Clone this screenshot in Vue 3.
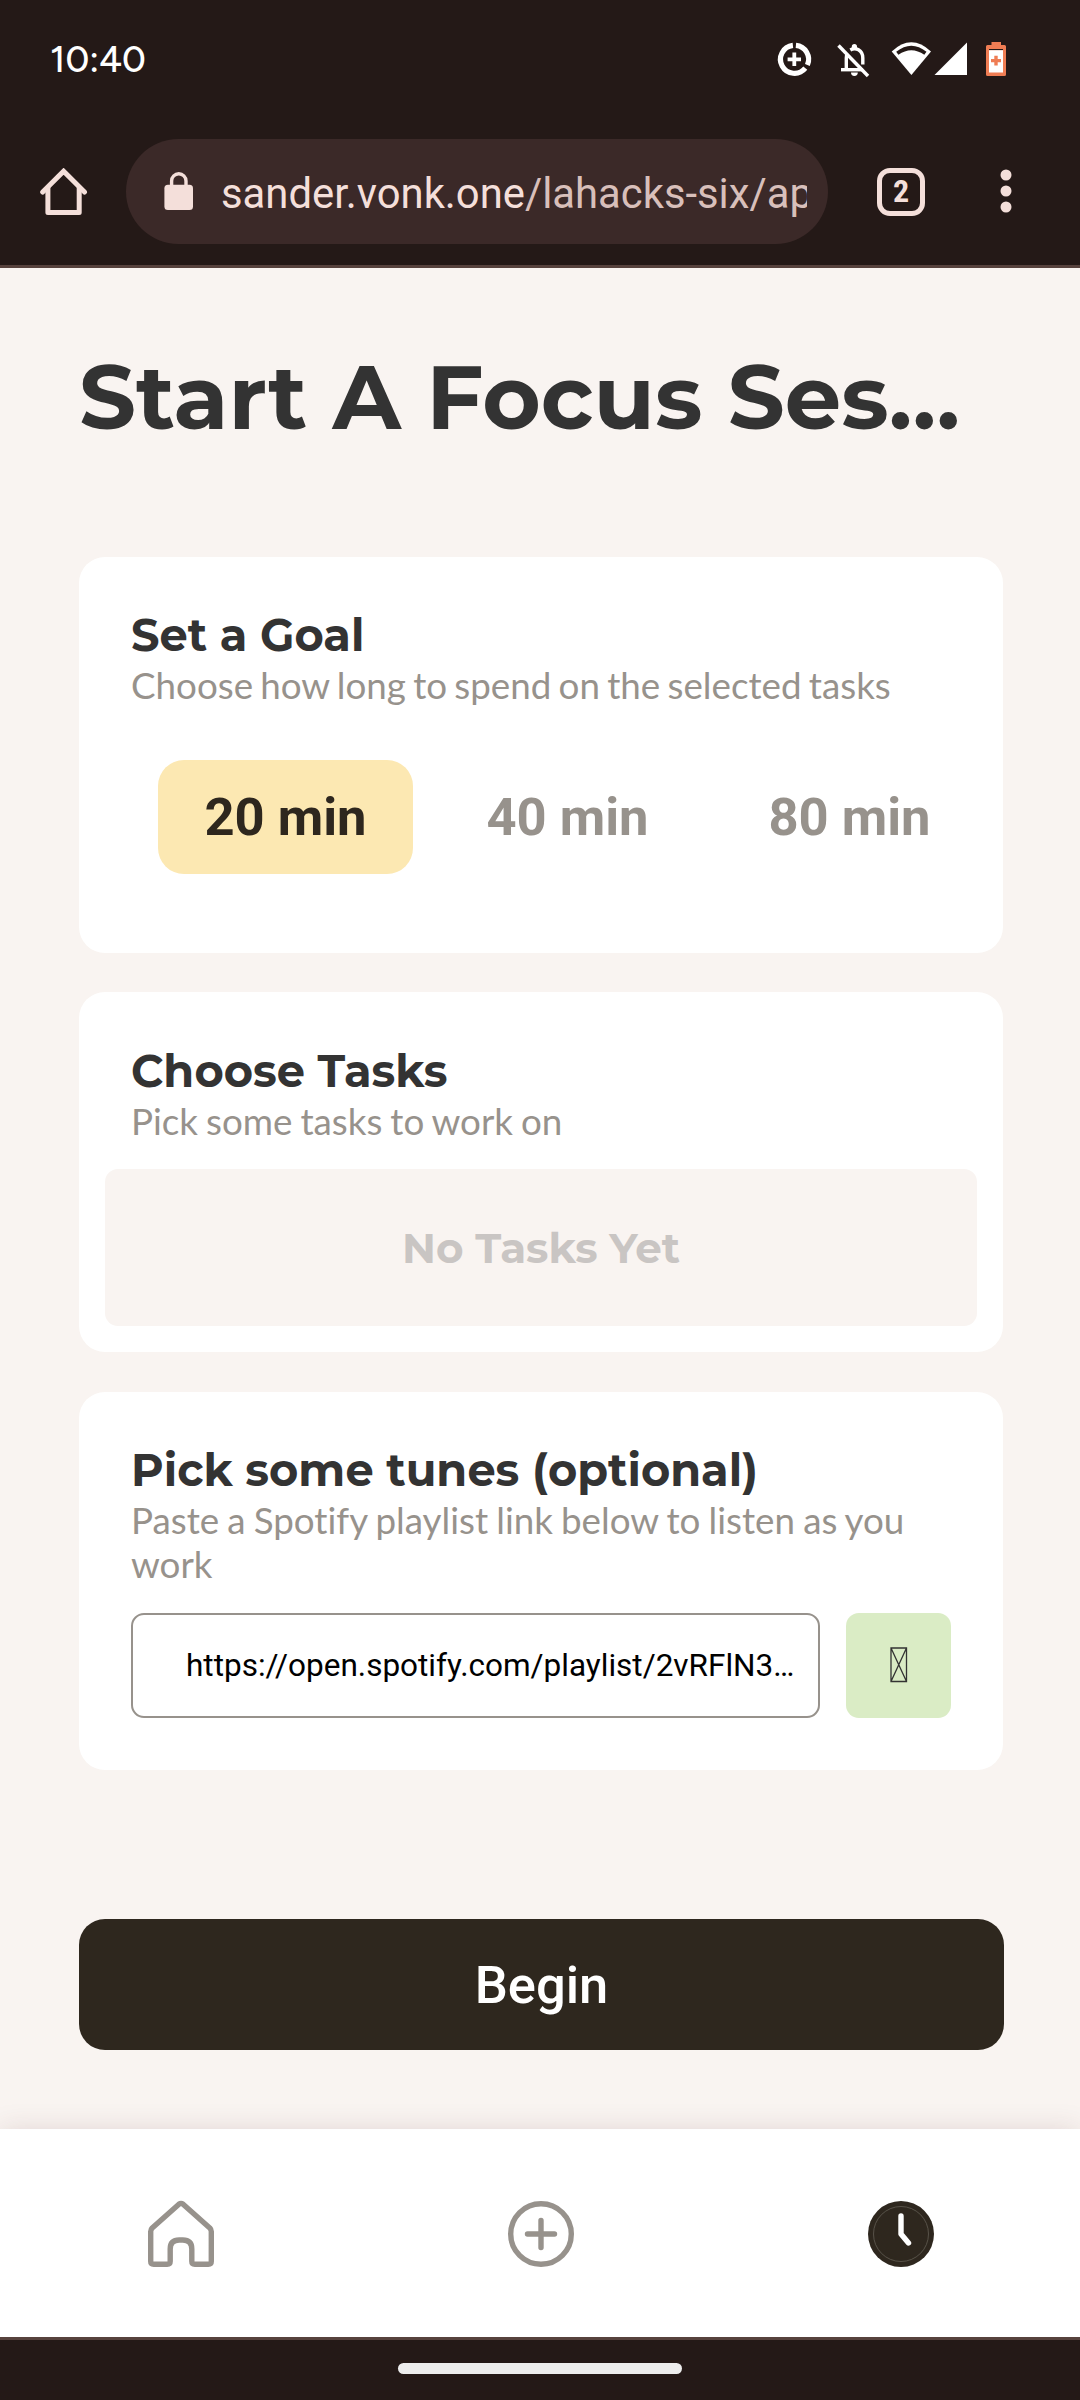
<script setup>
import { ref } from 'vue'

const goals = [20, 40, 80]
const selected = ref(20)
const playlist = 'https://open.spotify.com/playlist/2vRFlN3…'
</script>

<template>
  <div class="screen">
    <header class="chrome">
      <div class="status">
        <span class="time">10:40</span>
        <svg class="status-icons" width="244" height="48" viewBox="770 36 244 48">
          <g fill="none" stroke="#fff" stroke-width="5.2">
            <path d="M792.9 45.4A14 14 0 1 0 805.3 68.2" />
            <path d="M795.9 45.4A14 14 0 0 1 807.4 65" />
            <path d="M794.3 52.6V66M787.6 59.3H801" stroke-width="3.8" />
          </g>
          <g fill="none" stroke="#fff" stroke-width="3.4">
            <path d="M838.5 45.5L868 76" />
            <path d="M841 69.7H863" />
            <path d="M846.3 69V58Q846.3 55.5 847.2 53.6" />
            <path d="M850.3 50Q854.5 47.6 858.5 49.8Q862.8 52.3 862.8 58V64.5" />
          </g>
          <path d="M851.8 48V46.6A2.6 2.6 0 0 1 857 46.6V48.5ZM851 72.6H857.8A3.4 3.4 0 0 1 851 72.6Z" fill="#fff" />
          <path d="M891.7 51.5Q911.3 33.2 931 51.5L911.4 75Z" fill="#fff" />
          <path d="M896.2 51.8Q911.3 39.6 926.5 51.8L924.3 54.8Q911.3 45.6 898.4 54.8Z" fill="#241917" />
          <path d="M934.5 75L967 42.5V75Z" fill="#fff" />
          <path d="M991.5 42H1001V45H1004.5Q1006 45 1006 46.5V74.5Q1006 76 1004.5 76H987.5Q986 76 986 74.5V46.5Q986 45 987.5 45H991.5Z" fill="#ef7d54" />
          <path d="M989 49H1003V50.2H989Z" fill="#241917" />
          <path d="M989 50.2H1003V72.5H989Z" fill="#fff" />
          <path d="M994.3 55.7H997.7V59H1001V62.3H997.7V65.6H994.3V62.3H991V59H994.3Z" fill="#ef7d54" />
        </svg>
      </div>
      <div class="toolbar">
        <svg class="home" width="48" height="48" viewBox="0 0 48 48" fill="none" stroke="#f4dfda" stroke-width="5" stroke-linejoin="round" stroke-linecap="round">
          <path d="M2.7 24L23.6 3.2L44.5 24" stroke-linejoin="miter" />
          <path d="M7.9 20V44.5H39.2V20" />
        </svg>
        <div class="url">
          <svg width="30" height="38" viewBox="0 0 30 38">
            <path d="M7.6 14V9A7.2 7.2 0 0 1 22 9V14" fill="none" stroke="#f4dfda" stroke-width="3.4" />
            <rect x="0.4" y="12.7" width="28.6" height="25.3" rx="3.5" fill="#f4dfda" />
          </svg>
          <div class="address">sander.vonk.one<span>/lahacks-six/ap</span></div>
        </div>
        <div class="tabs">2</div>
        <svg class="more" width="12" height="46" viewBox="0 0 12 46" fill="#f4dfda">
          <circle cx="6" cy="7" r="5.5" /><circle cx="6" cy="23" r="5.5" /><circle cx="6" cy="39" r="5.5" />
        </svg>
      </div>
    </header>

    <main>
      <h1>Start A Focus Ses…</h1>

      <section class="card goal">
        <h2>Set a Goal</h2>
        <p class="sub">Choose how long to spend on the selected tasks</p>
        <div class="options">
          <button v-for="g in goals" :key="g" :class="{ active: g === selected }" @click="selected = g">{{ g }} min</button>
        </div>
      </section>

      <section class="card tasks">
        <h2>Choose Tasks</h2>
        <p class="sub">Pick some tasks to work on</p>
        <div class="empty">No Tasks Yet</div>
      </section>

      <section class="card tunes">
        <h2>Pick some tunes (optional)</h2>
        <p class="sub">Paste a Spotify playlist link below to listen as you work</p>
        <div class="link-row">
          <div class="link">{{ playlist }}</div>
          <button class="go" aria-label="Load playlist">
            <svg width="18" height="36" viewBox="0 0 18 36" fill="none" stroke="#333" stroke-width="1.3">
              <path d="M1 1H16.5V34.5H1ZM1 1L16.5 34.5M16.5 1L1 34.5" />
            </svg>
          </button>
        </div>
      </section>

      <button class="begin">Begin</button>
    </main>

    <nav>
      <a>
        <svg width="68" height="68" viewBox="0 0 68 68" fill="none" stroke="#97928c" stroke-width="5.4" stroke-linejoin="round">
          <path d="M3.7 31.5Q3.7 29.5 5.2 28L31.9 4.2Q34 2.6 36.1 4.2L62.8 28Q64.3 29.5 64.3 31.5V61.3Q64.3 64.3 61.3 64.3H47.8Q44.8 64.3 44.8 61.3V49Q44.8 40 35.8 40H32.2Q23.2 40 23.2 49V61.3Q23.2 64.3 20.2 64.3H6.7Q3.7 64.3 3.7 61.3Z" />
        </svg>
      </a>
      <a>
        <svg width="68" height="68" viewBox="0 0 68 68" fill="none" stroke="#97928c" stroke-width="5.4" stroke-linecap="round">
          <circle cx="34" cy="34" r="30.3" />
          <path d="M34 20.5V47.5M20.5 34H47.5" />
        </svg>
      </a>
      <a>
        <svg width="68" height="68" viewBox="0 0 68 68" fill="none">
          <circle cx="34" cy="34" r="33" fill="#2e271e" />
          <circle cx="34" cy="34" r="27.5" stroke="#69645a" stroke-width="0.7" />
          <path d="M34 16V34L41.5 43" stroke="#fff" stroke-width="5.4" stroke-linecap="round" stroke-linejoin="round" />
        </svg>
      </a>
    </nav>

    <footer><div class="handle"></div></footer>
  </div>
</template>

<style>
body {
  margin: 0;
}
</style>

<style scoped>
.screen {
  width: 1080px;
  height: 2400px;
  display: flex;
  flex-direction: column;
  overflow: hidden;
  background: #f9f4f1;
  font-family: Roboto, sans-serif;
}

.chrome {
  box-sizing: border-box;
  flex: none;
  height: 268px;
  background: #241917;
  border-bottom: 3px solid #57423d;
}

.status {
  display: flex;
  justify-content: space-between;
  align-items: center;
  height: 120px;
  padding: 0 66px 0 50px;
}

.time {
  margin-bottom: 2px;
  color: #fff;
  font: 550 37px/48px Figtree, Outfit, Inter, sans-serif;
}

.toolbar {
  display: flex;
  align-items: center;
  height: 105px;
  margin-top: 19px;
  padding: 0 68px 0 40px;
}

.url {
  box-sizing: border-box;
  display: flex;
  align-items: center;
  gap: 27px;
  width: 702px;
  height: 105px;
  margin-left: 38px;
  padding: 0 21px 0 38px;
  border-radius: 53px;
  background: #3b2928;
}

.url svg {
  flex: none;
  margin-bottom: 2px;
}

.address {
  flex: 1;
  overflow: hidden;
  white-space: nowrap;
  padding-top: 4px;
  color: #f4dfda;
  font-size: 41.8px;
  line-height: 60px;
}

.address span {
  color: #d8bfba;
}

.tabs {
  box-sizing: border-box;
  width: 48px;
  height: 48px;
  margin-left: 49px;
  border: 5px solid #f4dfda;
  border-radius: 13px;
  color: #f4dfda;
  font: 700 32px/37px "Roboto Condensed", Roboto, sans-serif;
  text-align: center;
}

.more {
  margin-left: auto;
  margin-bottom: 1px;
}

main {
  flex: none;
  height: 1861px;
  box-sizing: border-box;
  padding: 74px 76px 0 79px;
  display: flex;
  flex-direction: column;
}

h1 {
  margin: 0 0 105px;
  color: #333;
  font: 700 89.4px/110px Montserrat, Inter, sans-serif;
  white-space: nowrap;
}

.card {
  box-sizing: border-box;
  width: 924px;
  padding: 51px 52px 0 52px;
  border-radius: 26px;
  background: #fff;
}

h2 {
  margin: 0;
  color: #333;
  font: 700 44.7px/54px Montserrat, Inter, sans-serif;
}

.sub {
  margin: 1px 0 0;
  color: #97928c;
  font: 400 36.75px/44px Lato, sans-serif;
  font-variant-ligatures: none;
  word-spacing: -2.15px;
}

.goal {
  height: 396px;
}

.options {
  display: flex;
  gap: 27px;
  margin: 53px -27px 0 27px;
}

.options button {
  width: 255px;
  height: 114px;
  padding: 0;
  border: 0;
  border-radius: 26px;
  background: none;
  color: #97928c;
  font: 700 52.5px Roboto, sans-serif;
}

.options button.active {
  background: #fce8b2;
  color: #2e271e;
}

.tasks {
  height: 360px;
  margin-top: 39px;
  padding-top: 52px;
}

.tasks .sub {
  word-spacing: -1.4px;
}

.empty {
  height: 157px;
  margin: 26px -26px 0 -26px;
  border-radius: 13px;
  background: #f9f4f1;
  color: #c9c5c3;
  font: 700 42px/159px Montserrat, Inter, sans-serif;
  text-align: center;
}

.tunes {
  height: 378px;
  margin-top: 40px;
}

.tunes .sub {
  word-spacing: -1.25px;
}

.link-row {
  display: flex;
  gap: 26px;
  margin-top: 27px;
}

.link {
  box-sizing: border-box;
  width: 689px;
  height: 105px;
  padding-left: 53px;
  border: 2px solid #97928c;
  border-radius: 13px;
  color: #000;
  font-size: 31.5px;
  line-height: 101px;
  white-space: nowrap;
}

.go {
  display: flex;
  align-items: center;
  justify-content: center;
  width: 105px;
  height: 105px;
  padding: 0 0 2px;
  border: 0;
  border-radius: 13px;
  background: #daecc5;
}

.begin {
  height: 131px;
  margin-top: 149px;
  padding: 0;
  border: 0;
  border-radius: 26px;
  background: #2e271e;
  color: #fff;
  font: 500 52.5px Roboto, sans-serif;
}

nav {
  flex: none;
  display: flex;
  height: 208px;
  background: #fff;
  box-shadow: 0 0 26px rgba(80, 30, 40, 0.13);
}

nav a {
  flex: 1;
  display: flex;
  align-items: center;
  justify-content: center;
  padding: 2px 0 0 2px;
}

footer {
  box-sizing: border-box;
  flex: none;
  display: flex;
  justify-content: center;
  height: 63px;
  padding-top: 23px;
  border-top: 3px solid #57423d;
  background: #241917;
  position: relative;
}

.handle {
  width: 284px;
  height: 11px;
  border-radius: 6px;
  background: #ededed;
}
</style>
